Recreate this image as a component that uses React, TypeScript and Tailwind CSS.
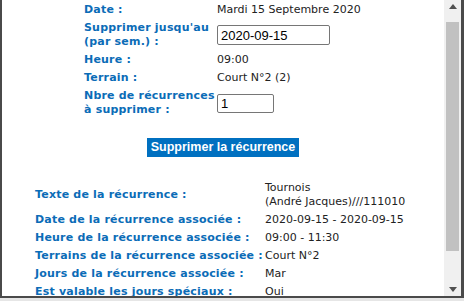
import React from 'react';

const TOP_ROWS = [
  { label: 'Heure :', value: '09:00' },
  { label: 'Terrain :', value: 'Court N°2 (2)' },
];

const BOTTOM_ROWS = [
  { label: 'Date de la récurrence associée :', value: '2020-09-15 - 2020-09-15' },
  { label: 'Heure de la récurrence associée :', value: '09:00 - 11:30' },
  { label: 'Terrains de la récurrence associée :', value: 'Court N°2' },
  { label: 'Jours de la récurrence associée :', value: 'Mar' },
  { label: 'Est valable les jours spéciaux :', value: 'Oui' },
];

function Arrow({ down }: { down?: boolean }) {
  return (
    <svg width="8" height="5" viewBox="0 0 8 5">
      <path d={down ? 'M0 0 L8 0 L4 5 Z' : 'M0 5 L8 5 L4 0 Z'} fill="#505050" />
    </svg>
  );
}

function Scrollbar() {
  return (
    <div className="w-[17px] bg-[#f0f0f0] flex flex-col items-center">
      <div className="h-[17px] pt-[4px] flex justify-center">
        <Arrow />
      </div>
      <div className="mt-[5px] h-[229px] w-[13px] bg-[#c1c1c1]" />
      <div className="flex-1" />
      <div className="h-[17px] pt-[8px] flex justify-center">
        <Arrow down />
      </div>
    </div>
  );
}

export default function App() {
  return (
    <div className="w-[464px] h-[301px] bg-[#e6e6e6] font-['DejaVu_Sans',Verdana,sans-serif] text-[11px] leading-[14px]">
      <div className="h-[298px] flex bg-white border-l-2 border-b-2 border-r-[3px] border-[#4a4a4a]">
        <div className="flex-1 overflow-hidden pt-[1px]">
          {/* Formulaire de suppression */}
          <div className="ml-[82px] grid grid-cols-[133px_auto] items-center">
            <div className="py-[2px] font-bold tracking-[0.2px] text-[#0b6cb7]">Date :</div>
            <div className="py-[2px] text-[#222]">Mardi 15 Septembre 2020</div>

            <div className="py-[2px] font-bold tracking-[0.2px] text-[#0b6cb7] whitespace-nowrap">
              Supprimer jusqu'au<br />(par sem.) :
            </div>
            <div className="py-[2px]">
              <input
                defaultValue="2020-09-15"
                className="w-[113px] h-[20px] px-[3px] border border-[#767676] rounded-[2px] font-['Liberation_Sans',Arial,sans-serif] text-[13px] text-black outline-none"
              />
            </div>

            {TOP_ROWS.map((r) => (
              <React.Fragment key={r.label}>
                <div className="py-[2px] font-bold tracking-[0.2px] text-[#0b6cb7]">{r.label}</div>
                <div className="py-[2px] text-[#222]">{r.value}</div>
              </React.Fragment>
            ))}

            <div className="py-[2px] font-bold tracking-[0.2px] text-[#0b6cb7] whitespace-nowrap">
              Nbre de récurrences<br />à supprimer :
            </div>
            <div className="py-[2px]">
              <input
                defaultValue="1"
                className="w-[57px] h-[19px] px-[3px] border border-[#767676] rounded-[2px] font-['Liberation_Sans',Arial,sans-serif] text-[13px] text-black outline-none"
              />
            </div>
          </div>

          <div className="mt-[19px] flex justify-center">
            <button className="w-[152px] h-[19px] bg-[#0070c0] text-white font-bold font-['Liberation_Sans',Arial,sans-serif] text-[12.5px] leading-[19px]">
              Supprimer la récurrence
            </button>
          </div>

          {/* Détails de la récurrence */}
          <div className="mt-[22px] ml-[33px] grid grid-cols-[230px_auto] items-center">
            <div className="py-[2px] font-bold tracking-[0.2px] text-[#0b6cb7] whitespace-nowrap">Texte de la récurrence :</div>
            <div className="py-[2px] text-[#222] whitespace-nowrap">
              Tournois<br />(André Jacques)///111010
            </div>
            {BOTTOM_ROWS.map((r) => (
              <React.Fragment key={r.label}>
                <div className="py-[2px] font-bold tracking-[0.2px] text-[#0b6cb7] whitespace-nowrap">{r.label}</div>
                <div className="py-[2px] text-[#222] whitespace-nowrap">{r.value}</div>
              </React.Fragment>
            ))}
          </div>
        </div>
        <Scrollbar />
      </div>
    </div>
  );
}
